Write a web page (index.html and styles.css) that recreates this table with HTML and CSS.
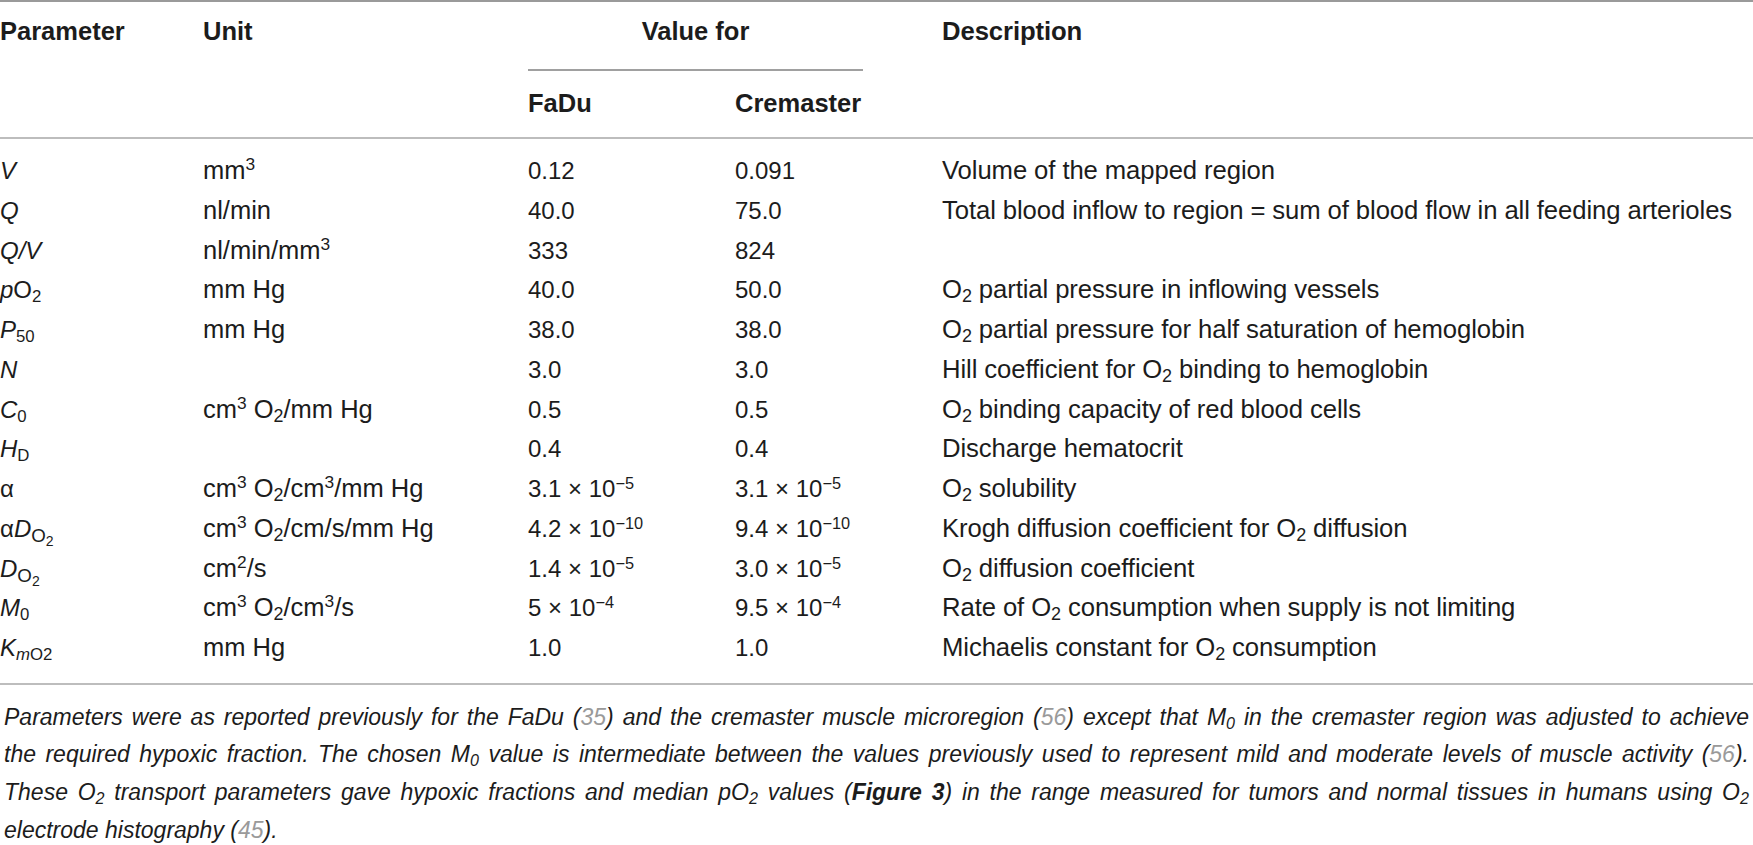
FILE: index.html
```html
<!DOCTYPE html>
<html lang="en">
<head>
<meta charset="utf-8">
<title>O2 transport parameters</title>
<link rel="stylesheet" href="styles.css">
</head>
<body>
<div class="tbl">
  <div class="head">
    <div class="hrow hrow1">
      <div class="c">Parameter</div>
      <div class="c">Unit</div>
      <div class="c c-vals"><div class="valuefor">Value for</div></div>
      <div class="c c-desc">Description</div>
    </div>
    <div class="hrow hrow2">
      <div class="c"></div>
      <div class="c"></div>
      <div class="c">FaDu</div>
      <div class="c">Cremaster</div>
      <div class="c c-desc"></div>
    </div>
  </div>
  <div class="body">
    <div class="row">
      <div class="c"><i>V</i></div>
      <div class="c c-unit">mm<span class="sup">3</span></div>
      <div class="c">0.12</div>
      <div class="c">0.091</div>
      <div class="c c-desc">Volume of the mapped region</div>
    </div>
    <div class="row">
      <div class="c"><i>Q</i></div>
      <div class="c c-unit">nl/min</div>
      <div class="c">40.0</div>
      <div class="c">75.0</div>
      <div class="c c-desc">Total blood inflow to region = sum of blood flow in all feeding arterioles</div>
    </div>
    <div class="row">
      <div class="c"><i>Q/V</i></div>
      <div class="c c-unit">nl/min/mm<span class="sup">3</span></div>
      <div class="c">333</div>
      <div class="c">824</div>
      <div class="c c-desc"></div>
    </div>
    <div class="row">
      <div class="c"><i>p</i>O<span class="sub">2</span></div>
      <div class="c c-unit">mm Hg</div>
      <div class="c">40.0</div>
      <div class="c">50.0</div>
      <div class="c c-desc">O<span class="sub">2</span> partial pressure in inflowing vessels</div>
    </div>
    <div class="row">
      <div class="c"><i>P</i><span class="sub">50</span></div>
      <div class="c c-unit">mm Hg</div>
      <div class="c">38.0</div>
      <div class="c">38.0</div>
      <div class="c c-desc">O<span class="sub">2</span> partial pressure for half saturation of hemoglobin</div>
    </div>
    <div class="row">
      <div class="c"><i>N</i></div>
      <div class="c c-unit"></div>
      <div class="c">3.0</div>
      <div class="c">3.0</div>
      <div class="c c-desc">Hill coefficient for O<span class="sub">2</span> binding to hemoglobin</div>
    </div>
    <div class="row">
      <div class="c"><i>C</i><span class="sub">0</span></div>
      <div class="c c-unit">cm<span class="sup">3</span> O<span class="sub">2</span>/mm Hg</div>
      <div class="c">0.5</div>
      <div class="c">0.5</div>
      <div class="c c-desc">O<span class="sub">2</span> binding capacity of red blood cells</div>
    </div>
    <div class="row">
      <div class="c"><i>H</i><span class="sub">D</span></div>
      <div class="c c-unit"></div>
      <div class="c">0.4</div>
      <div class="c">0.4</div>
      <div class="c c-desc">Discharge hematocrit</div>
    </div>
    <div class="row">
      <div class="c">α</div>
      <div class="c c-unit">cm<span class="sup">3</span> O<span class="sub">2</span>/cm<span class="sup">3</span>/mm Hg</div>
      <div class="c">3.1 × 10<span class="sup">−5</span></div>
      <div class="c">3.1 × 10<span class="sup">−5</span></div>
      <div class="c c-desc">O<span class="sub">2</span> solubility</div>
    </div>
    <div class="row">
      <div class="c">α<i>D</i><span class="subo">O<span class="subsub">2</span></span></div>
      <div class="c c-unit">cm<span class="sup">3</span> O<span class="sub">2</span>/cm/s/mm Hg</div>
      <div class="c">4.2 × 10<span class="sup">−10</span></div>
      <div class="c">9.4 × 10<span class="sup">−10</span></div>
      <div class="c c-desc">Krogh diffusion coefficient for O<span class="sub">2</span> diffusion</div>
    </div>
    <div class="row">
      <div class="c"><i>D</i><span class="subo">O<span class="subsub">2</span></span></div>
      <div class="c c-unit">cm<span class="sup">2</span>/s</div>
      <div class="c">1.4 × 10<span class="sup">−5</span></div>
      <div class="c">3.0 × 10<span class="sup">−5</span></div>
      <div class="c c-desc">O<span class="sub">2</span> diffusion coefficient</div>
    </div>
    <div class="row">
      <div class="c"><i>M</i><span class="sub">0</span></div>
      <div class="c c-unit">cm<span class="sup">3</span> O<span class="sub">2</span>/cm<span class="sup">3</span>/s</div>
      <div class="c">5 × 10<span class="sup">−4</span></div>
      <div class="c">9.5 × 10<span class="sup">−4</span></div>
      <div class="c c-desc">Rate of O<span class="sub">2</span> consumption when supply is not limiting</div>
    </div>
    <div class="row">
      <div class="c"><i>K</i><span class="sub"><i>m</i>O2</span></div>
      <div class="c c-unit">mm Hg</div>
      <div class="c">1.0</div>
      <div class="c">1.0</div>
      <div class="c c-desc">Michaelis constant for O<span class="sub">2</span> consumption</div>
    </div>
  </div>
</div>
<div class="caption">
  <span class="line">Parameters were as reported previously for the FaDu (<span class="ref">35</span>) and the cremaster muscle microregion (<span class="ref">56</span>) except that M<span class="csub">0</span> in the cremaster region was adjusted to achieve</span>
  <span class="line">the required hypoxic fraction. The chosen M<span class="csub">0</span> value is intermediate between the values previously used to represent mild and moderate levels of muscle activity (<span class="ref">56</span>).</span>
  <span class="line">These O<span class="csub">2</span> transport parameters gave hypoxic fractions and median pO<span class="csub">2</span> values (<b>Figure 3</b>) in the range measured for tumors and normal tissues in humans using O<span class="csub">2</span></span>
  <span class="line last">electrode histography (<span class="ref">45</span>).</span>
</div>
</body>
</html>
```
FILE: styles.css
```css
html, body {
  margin: 0;
  padding: 0;
  background: #ffffff;
  overflow: hidden;
}

body {
  font-family: "Liberation Sans", Arial, sans-serif;
  color: #1c1c1c;
  width: 1753px;
}

.tbl {
  border-top: 2px solid #9a9a9a;
}

.hrow,
.row {
  display: grid;
  grid-template-columns: 203px 325px 207px 207px 1fr;
}

.head {
  font-weight: bold;
  font-size: 25.5px;
  border-bottom: 2px solid #bdbdbd;
}

.hrow1 {
  height: 69px;
}

.hrow1 .c {
  padding-top: 15px;
  box-sizing: border-box;
}

.hrow1 .c-vals {
  grid-column: 3 / 5;
  padding-top: 0;
}

.valuefor {
  width: 335px;
  height: 69px;
  box-sizing: border-box;
  border-bottom: 2px solid #a0a0a0;
  text-align: center;
  padding-top: 15px;
}

.hrow2 {
  height: 66px;
}

.hrow2 .c {
  padding-top: 18px;
}

.c {
  white-space: nowrap;
}

.body {
  font-size: 24px;
  padding-top: 12px;
  padding-bottom: 15px;
  border-bottom: 2px solid #bdbdbd;
}

.row {
  height: 39.75px;
  line-height: 39.75px;
}

.c-unit {
  font-size: 25.5px;
}

.c-desc {
  font-size: 25.7px;
  letter-spacing: -0.1px;
}

.sup {
  font-size: 0.68em;
  vertical-align: 0.5em;
  line-height: 0;
}

.sub {
  font-size: 0.7em;
  vertical-align: -0.22em;
  line-height: 0;
}

.subo {
  font-size: 0.78em;
  vertical-align: -0.28em;
  line-height: 0;
}

.subsub {
  font-size: 0.75em;
  vertical-align: -0.3em;
}

.caption {
  margin-top: 14px;
  font-style: italic;
  font-size: 23px;
  line-height: 37.67px;
  padding-left: 4px;
}

.caption .line {
  display: block;
  white-space: nowrap;
  text-align: justify;
  text-align-last: justify;
  width: 1745px;
}

.caption .line.last {
  text-align-last: left;
}

.ref {
  color: #9a9a9a;
}

.csub {
  font-size: 0.7em;
  vertical-align: -0.25em;
  line-height: 0;
}
```
